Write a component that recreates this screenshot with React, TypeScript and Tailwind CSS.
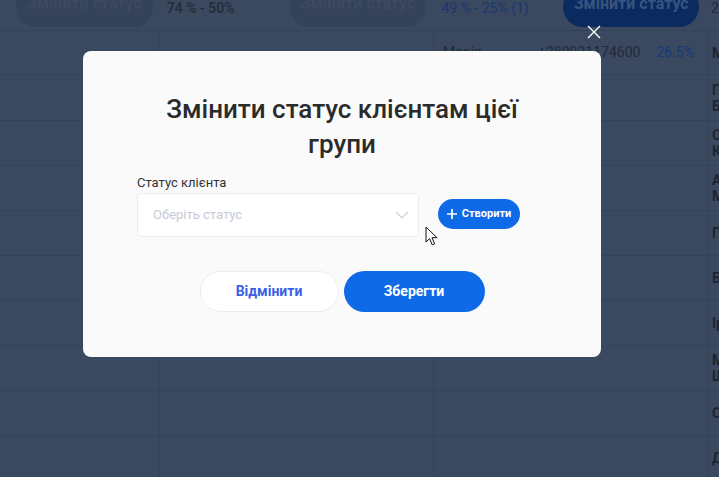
import React from "react";

const ROWS = [
  { h: "h-[44px]", b: "+380931174600", c: "26.5%", d: ["Марія"] },
  { h: "h-[46px]", b: "", c: "", d: ["Павло", "Бондар"] },
  { h: "h-[45px]", b: "", c: "", d: ["Ольга", "Коваль"] },
  { h: "h-[45px]", b: "", c: "", d: ["Андрій", "Мельник"] },
  { h: "h-[45px]", b: "", c: "", d: ["Петро"] },
  { h: "h-[45px]", b: "", c: "", d: ["Богдан"] },
  { h: "h-[45px]", b: "", c: "", d: ["Ірина"] },
  { h: "h-[45px]", b: "", c: "", d: ["Максим", "Шевчук"] },
  { h: "h-[45px]", b: "", c: "", d: ["Олена"] },
  { h: "h-[45px]", b: "", c: "", d: ["Дмитро"] },
];

function Background() {
  return (
    <div className="absolute inset-0">
      {/* header with group actions */}
      <div className="flex h-[31px] items-center border-b border-[#34425a] text-[14px]">
        <div className="ml-[16px] flex h-[40px] w-[137px] -mt-[16px] items-center justify-center rounded-full bg-[#34425a] text-[16px] font-bold text-[#3c4a61]">
          <span className="-mt-[6px]">Змінити статус</span>
        </div>
        <div className="ml-[14px] -mt-[14px] w-[123px] font-medium text-[#262b35]">74 % - 50%</div>
        <div className="flex h-[40px] w-[137px] -mt-[16px] items-center justify-center rounded-full bg-[#34425a] text-[16px] font-bold text-[#3c4a61]">
          <span className="-mt-[6px]">Змінити статус</span>
        </div>
        <div className="ml-[15px] -mt-[14px] w-[122px] text-[#1a3870]">49 % - 25% (1)</div>
        <div className="flex h-[40px] w-[136px] -mt-[16px] items-center justify-center rounded-full bg-[#0a2a60] text-[16px] font-bold text-[#37557f]">
          <span className="-mt-[6px]">Змінити статус</span>
        </div>
        <div className="ml-[12px] -mt-[14px] text-[#222a38]">2</div>
      </div>
      {ROWS.map((r, i) => (
        <div key={i} className={`grid grid-cols-[160px_274px_274px_1fr] border-b border-[#34425a] ${r.h}`}>
          <div className="border-r border-[#34425a]" />
          <div className="border-r border-[#34425a]" />
          <div className="flex items-center justify-between border-r border-[#34425a] pl-[9px] pr-[13px] text-[14px]">
            <span className="text-[#222a38]">{i === 0 ? "Марія" : ""}</span>
            <span className="flex gap-[16px]">
              <span className="text-[#222a38]">{r.b}</span>
              <span className="text-[#173a7a]">{r.c}</span>
            </span>
          </div>
          <div className="flex flex-col justify-center pl-[4px] text-[14px] leading-[16px] font-bold text-[#1e2532] whitespace-nowrap">
            {r.d.map((t) => (
              <span key={t}>{t}</span>
            ))}
          </div>
        </div>
      ))}
    </div>
  );
}

function Chevron() {
  return (
    <svg width="14" height="8" viewBox="0 0 14 8" fill="none">
      <path d="M1 1l6 6 6-6" stroke="#c8ced8" strokeWidth="1.2" />
    </svg>
  );
}

function Cursor() {
  return (
    <svg width="14" height="21" viewBox="0 0 14 21" className="absolute left-[425px] top-[226px]">
      <path
        d="M1 1v15l3.6-3.4 2.6 6.2 2.4-1-2.6-6.1H12z"
        fill="#fff"
        stroke="#111"
        strokeWidth="1"
        strokeLinejoin="round"
      />
    </svg>
  );
}

export default function App() {
  return (
    <div
      className="relative h-[477px] w-[719px] overflow-hidden bg-[#3a4860]"
      style={{ fontFamily: "Roboto, 'Noto Sans', sans-serif" }}
    >
      <Background />

      {/* close */}
      <button className="absolute left-[587px] top-[25px]">
        <svg width="14" height="14" viewBox="0 0 14 14">
          <path d="M1 1l12 12M13 1L1 13" stroke="#fff" strokeWidth="1.4" />
        </svg>
      </button>

      {/* modal */}
      <div className="absolute left-[83px] top-[51px] w-[518px] rounded-[8px] bg-[#fafafa] pt-[41px] pb-[45px]">
        <h2 className="mx-auto w-[420px] text-center text-[26px] leading-[35px] font-medium text-[#2b2b2b]">
          Змінити статус клієнтам цієї групи
        </h2>
        <div className="mt-[13px] flex items-end pl-[54px]">
          <div className="w-[282px]">
            <div className="mb-[2px] text-[13px] leading-[16px] text-[#333]">Статус клієнта</div>
            <div className="flex h-[44px] items-center justify-between rounded-[4px] border border-[#ececec] bg-white pl-[15px] pr-[9px]">
              <span className="text-[13px] text-[#c3cad6]">Оберіть статус</span>
              <Chevron />
            </div>
          </div>
          <button className="mb-[8px] ml-[19px] flex h-[30px] w-[82px] items-center justify-center gap-[5px] rounded-full bg-[#0f6ae8] text-[11px] font-bold text-white">
            <svg width="10" height="10" viewBox="0 0 10 10">
              <path d="M5 0v10M0 5h10" stroke="#fff" strokeWidth="1.7" />
            </svg>
            Створити
          </button>
        </div>
        <div className="mt-[34px] flex justify-center gap-[5px]">
          <button className="h-[41px] w-[139px] rounded-full border border-[#ececec] bg-white text-[14px] font-bold text-[#3b5fe6]">
            Відмінити
          </button>
          <button className="h-[41px] w-[141px] rounded-full bg-[#0f6ae8] text-[14px] font-bold text-white">
            Зберегти
          </button>
        </div>
      </div>

      <Cursor />
    </div>
  );
}
